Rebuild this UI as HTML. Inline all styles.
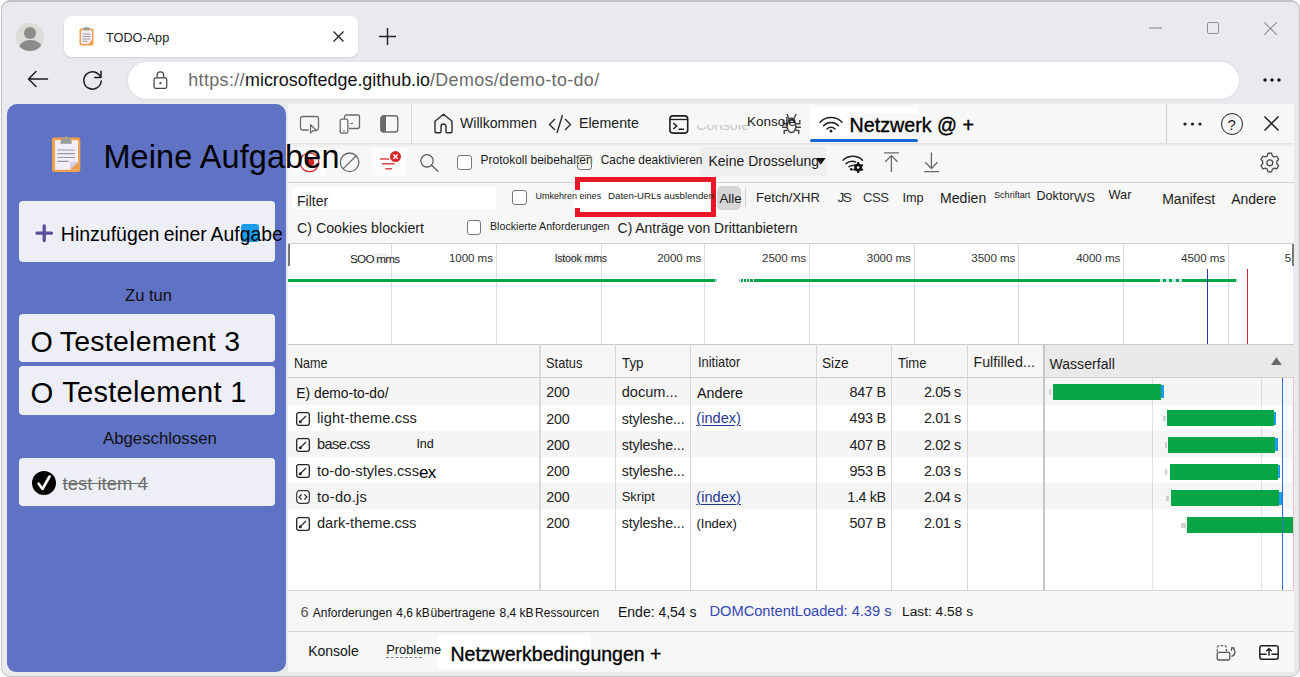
<!DOCTYPE html>
<html lang="de"><head><meta charset="utf-8"><title>TODO-App</title>
<style>
*{box-sizing:border-box;margin:0;padding:0}
html,body{width:1300px;height:677px;overflow:hidden;background:#fff}
body{font-family:"Liberation Sans",sans-serif;color:#111;position:relative}
.a{position:absolute}
.t{position:absolute;white-space:nowrap;line-height:1;color:#1b1b1b}
svg{position:absolute;overflow:visible}
.win{left:1px;top:0;width:1299px;height:677px;background:#e8eaee;border-radius:9px;border:1.5px solid #c2c2c2;border-top-width:2px}
.cb{position:absolute;width:14px;height:14px;border:1px solid #767676;border-radius:3px;background:#fff}
</style></head><body>
<div class="a win"></div>

<!-- ===== browser chrome ===== -->
<div id="chrome">
<div class="a" style="left:16px;top:22.500px;width:28px;height:28.500px;border-radius:50%;background:#dddbd8;overflow:hidden">
  <div class="a" style="left:7.800px;top:4px;width:12.400px;height:12.400px;border-radius:50%;background:#8d8b89"></div>
  <div class="a" style="left:2.500px;top:17.500px;width:23px;height:17px;border-radius:50%;background:#8d8b89"></div>
</div>
<div class="a" style="left:64px;top:16px;width:294px;height:41px;border-radius:8px;background:#fff;box-shadow:0 1px 2px rgba(0,0,0,.12)"></div>
<svg style="left:79px;top:27px" width="15" height="19" viewBox="0 0 15 19"><rect x="0.5" y="1.5" width="14" height="17" rx="1.5" fill="#f0a04b"/><rect x="2" y="3.2" width="11" height="13.6" fill="#f3eef5"/><rect x="4.5" y="0.3" width="6" height="3" rx="1" fill="#9a9a9a"/><path d="M3.5 7h8M3.5 9.5h8M3.5 12h8M3.5 14.3h5" stroke="#9b97a6" stroke-width="1"/><path d="M13 13v3.8H9.5z" fill="#e89a48"/></svg>
<div class="t" style="left:106px;top:31.700px;font-size:12.700px">TODO-App</div>
<svg style="left:333px;top:31px" width="11" height="11" viewBox="0 0 11 11"><path d="M0.5 0.5l10 10M10.5 0.5l-10 10" stroke="#222" stroke-width="1.3" fill="none"/></svg>
<svg style="left:379px;top:28px" width="17" height="17" viewBox="0 0 17 17"><path d="M8.5 0v17M0 8.5h17" stroke="#222" stroke-width="1.4" fill="none"/></svg>
<!-- window controls -->
<svg style="left:1149px;top:27px" width="13" height="2" viewBox="0 0 13 2"><path d="M0 1h13" stroke="#8e8f91" stroke-width="1.2"/></svg>
<div class="a" style="left:1207px;top:22px;width:12px;height:12px;border:1.2px solid #8e8f91;border-radius:2px"></div>
<svg style="left:1264px;top:22px" width="13" height="13" viewBox="0 0 13 13"><path d="M0.3 0.3l12.4 12.4M12.7 0.3L0.3 12.7" stroke="#8e8f91" stroke-width="1.1" fill="none"/></svg>
<!-- nav row -->
<svg style="left:27px;top:70px" width="21" height="18" viewBox="0 0 21 18"><path d="M20.5 9H1.5M9 1.5L1.5 9 9 16.5" stroke="#1b1b1b" stroke-width="1.5" fill="none" stroke-linecap="round" stroke-linejoin="round"/></svg>
<svg style="left:82px;top:69px" width="21" height="21" viewBox="0 0 21 21"><path d="M18.6 8.2A8.7 8.7 0 1 0 19.2 12" stroke="#1b1b1b" stroke-width="1.5" fill="none" stroke-linecap="round"/><path d="M19 2.2v6.2h-6.2" stroke="#1b1b1b" stroke-width="1.5" fill="none" stroke-linecap="round" stroke-linejoin="round"/></svg>
<div class="a" style="left:128px;top:62px;width:1111px;height:37px;border-radius:18.5px;background:#fff;box-shadow:0 0 3px rgba(0,0,0,.10)"></div>
<svg style="left:152.800px;top:70.500px" width="14.800" height="18.500" viewBox="0 0 16 21"><rect x="0.8" y="7.8" width="14.4" height="12" rx="2" fill="none" stroke="#444" stroke-width="1.4"/><path d="M4.3 7.6V4.6a3.7 3.7 0 0 1 7.4 0v3" fill="none" stroke="#444" stroke-width="1.4"/><circle cx="8" cy="13.8" r="1.3" fill="#444"/></svg>
<div class="t" style="left:188.20px;top:72.05px;font-size:17.9px;letter-spacing:0.387px;color:#6b6b6b">https://</div>
<div class="t" style="left:245.00px;top:72.05px;font-size:17.9px;letter-spacing:0.001px;color:#111">microsoftedge.github.io</div>
<div class="t" style="left:430.00px;top:72.05px;font-size:17.9px;letter-spacing:0.357px;color:#6b6b6b">/Demos/demo-to-do/</div>
<svg style="left:1263px;top:78px" width="18" height="4" viewBox="0 0 18 4"><circle cx="2" cy="2" r="1.7" fill="#111"/><circle cx="9" cy="2" r="1.7" fill="#111"/><circle cx="16" cy="2" r="1.7" fill="#111"/></svg>
</div>

<!-- ===== page ===== -->
<div id="page">
<div class="a" style="left:7px;top:104px;width:279px;height:567.5px;border-radius:10px 10px 10px 9px;background:#5f72c3"></div>
<svg style="left:50px;top:134px" width="32" height="40" viewBox="0 0 32 40"><rect x="2" y="3.400" width="28.300" height="34.600" rx="2.200" fill="#f0a04b"/><rect x="4.900" y="6.200" width="23.200" height="29.600" fill="#f2eef7"/><path d="M10.200 9.800L11.400 4.500H20.800L22 9.800z" fill="#9a9a9a"/><circle cx="16.100" cy="4.800" r="2.500" fill="#9a9a9a"/><circle cx="16.100" cy="4.600" r="1" fill="#f0a04b"/><path d="M7.300 16H25M7.300 19.700H25M7.300 23.500H25M7.300 27.300H18.500" stroke="#99979f" stroke-width="1.200"/><path d="M28.100 28V35.800H20z" fill="#e89b4c"/><path d="M20 28H28.100L20 35.800z" fill="#d5cde6"/></svg>
<div class="a" style="left:19px;top:201px;width:256px;height:61px;border-radius:4px;background:#eeeff6"></div>
<svg style="left:35px;top:224px" width="18" height="18" viewBox="0 0 18 18"><path d="M9.200 2v14.500M2 9.200h14.500" stroke="#5c4f9a" stroke-width="3.300" fill="none" stroke-linecap="round"/></svg>
<div class="a" style="left:241px;top:224px;width:18px;height:18px;border-radius:3px;background:#189be8"></div>
<div class="t" style="left:60.800px;top:225.300px;font-size:19.500px;color:#000">Hinzufügen <span style="position:absolute;left:103px;font-size:19.350px">einer </span><span style="position:absolute;left:149.800px;font-size:19.350px">Aufgabe</span></div>
<div class="t" style="left:125px;top:288px;font-size:16.600px;color:#111">Zu tun</div>
<div class="a" style="left:19px;top:313.600px;width:256px;height:48.800px;border-radius:4px;background:#eeeff6"></div>
<div class="t" style="left:30.60px;top:327.60px;font-size:28.700px;color:#000">O</div><div class="t" style="left:59.700px;top:327.17px;font-size:28.400px;letter-spacing:.3px;color:#000">Testelement 3</div>
<div class="a" style="left:19px;top:366px;width:256px;height:48.5px;border-radius:4px;background:#eeeff6"></div>
<div class="t" style="left:30.60px;top:377.70px;font-size:29.300px;color:#000">O</div><div class="t" style="left:62.200px;top:378.07px;font-size:29px;letter-spacing:.3px;color:#000">Testelement 1</div>
<div class="t" style="left:103.00px;top:430.80px;font-size:16.8px;color:#111">Abgeschlossen</div>
<div class="a" style="left:19px;top:457.500px;width:256px;height:48.900px;border-radius:4px;background:#eeeff6"></div>
<div class="a" style="left:32px;top:471px;width:24px;height:24px;border-radius:50%;background:#000"></div>
<svg style="left:32px;top:471px" width="24" height="24" viewBox="0 0 24 24"><path d="M6.500 12.500l4 5.500L17.500 5.500" stroke="#fff" stroke-width="2.6" fill="none" stroke-linejoin="round" stroke-linecap="round"/></svg>
<div class="t" style="left:62.50px;top:474.80px;font-size:18.5px;color:#6f6f6f;text-decoration:line-through">test item 4</div>
</div>

<!-- ===== devtools ===== -->
<div id="dt">
<div class="a" style="left:286px;top:104px;width:2px;height:567.500px;background:#e9e9eb"></div>
<div class="a" style="left:288px;top:104px;width:1006px;height:567.500px;background:#f7f7f7"></div>
<!-- tab bar -->
<div id="tabs">
<div class="a" style="left:288px;top:142.600px;width:1006px;height:4.500px;background:linear-gradient(#dcdcdc,#ececec 35%,#f7f7f7)"></div>
<div class="a" style="left:411px;top:104px;width:1px;height:39px;background:#d9d9d9"></div>
<div class="a" style="left:1166px;top:104px;width:1px;height:39px;background:#cfcfcf"></div>
<div class="a" style="left:810px;top:106.600px;width:108px;height:35px;background:#fff;border-radius:4px 4px 2px 2px"></div>
<div class="a" style="left:849px;top:113px;width:69px;height:22.500px;background:#f7f7f7"></div>
<div class="a" style="left:810px;top:139px;width:108px;height:3.200px;background:#1467d6;border-radius:2px"></div>
<svg style="left:299px;top:114px" width="22" height="21" viewBox="0 0 22 21"><path d="M9.500 16H3.500a2 2 0 0 1-2-2V4.500a2 2 0 0 1 2-2h14a2 2 0 0 1 2 2v9.500a2 2 0 0 1-1.500 1.900" fill="none" stroke="#6a6a6a" stroke-width="1.3"/><path d="M11.500 10.800v8.200l2.700-2.300h3.600z" fill="#f7f7f7" stroke="#6a6a6a" stroke-width="1.2" stroke-linejoin="round"/></svg>
<svg style="left:339px;top:113px" width="22" height="22" viewBox="0 0 22 22"><path d="M5.500 6V4a2 2 0 0 1 2-2h11a2 2 0 0 1 2 2v9.500a2 2 0 0 1-2 2H10" fill="none" stroke="#6a6a6a" stroke-width="1.3"/><rect x="1.200" y="6.200" width="7.600" height="14" rx="1.800" fill="#f7f7f7" stroke="#6a6a6a" stroke-width="1.3"/><path d="M4 18h2M11.500 10.500h2.500" stroke="#6a6a6a" stroke-width="1.200"/></svg>
<svg style="left:380px;top:115px" width="19" height="18" viewBox="0 0 19 18"><rect x="0.800" y="0.800" width="17" height="16.200" rx="2.800" fill="none" stroke="#6a6a6a" stroke-width="1.400"/><path d="M3.300 0.800h2.700v16.200H3.300a2.500 2.500 0 0 1-2.500-2.500V3.300a2.500 2.500 0 0 1 2.500-2.500z" fill="#6a6a6a"/></svg>
<svg style="left:433px;top:113px" width="21" height="21" viewBox="0 0 21 21"><path d="M10.500 1.200L2 8.300v10.200a1.300 1.300 0 0 0 1.300 1.300h3.400a1.300 1.300 0 0 0 1.300-1.300v-5a2.500 2.500 0 0 1 5 0v5a1.300 1.300 0 0 0 1.300 1.300h3.400a1.300 1.300 0 0 0 1.300-1.300V8.300z" fill="none" stroke="#2a2a2a" stroke-width="1.400" stroke-linejoin="round"/></svg>
<div class="t" style="left:460px;top:116px;font-size:14.100px">Willkommen</div>
<svg style="left:548px;top:114px" width="24" height="20" viewBox="0 0 24 20"><path d="M7 5L1.500 10.500 7 16M17 5l5.500 5.500L17 16M14.500 1l-5.500 18" fill="none" stroke="#2a2a2a" stroke-width="1.400" stroke-linejoin="miter"/></svg>
<div class="t" style="left:579px;top:116px;font-size:14.200px">Elemente</div>
<svg style="left:669px;top:115px" width="20" height="19" viewBox="0 0 20 19"><rect x="0.900" y="0.900" width="17.800" height="17.200" rx="3" fill="none" stroke="#1f1f1f" stroke-width="1.600"/><path d="M1 4.500h17.500" stroke="#1f1f1f" stroke-width="1.300"/><path d="M4.300 8l3.400 3-3.400 3M9.500 14.200h5.500" fill="none" stroke="#1f1f1f" stroke-width="1.500"/></svg>
<div class="t" style="left:696px;top:117.500px;font-size:14.500px;color:#c9c9c9">Console</div>
<div class="a" style="left:694px;top:115px;width:56px;height:10px;background:#f7f7f7"></div>
<svg style="left:781px;top:113px" width="21" height="21" viewBox="0 0 21 21"><ellipse cx="10.500" cy="13.200" rx="4.400" ry="6.300" fill="none" stroke="#444" stroke-width="1.500"/><path d="M7.200 8.500a3.300 3.300 0 0 1 6.600 0M7.800 5.200L5.800 1M13.200 5.200l2-4.200M6.200 10.800H2.200V7M14.800 10.800h4V7M6 14.200H1M15 14.200h5M6.500 17.300l-3.300.4V21M14.500 17.300l3.300.4V21" fill="none" stroke="#444" stroke-width="1.400"/></svg>
<div class="t" style="left:747px;top:114.500px;font-size:13.500px">Konsole</div>
<svg style="left:819px;top:116px" width="24" height="17" viewBox="0 0 24 17"><path d="M1 6.200a15.500 15.500 0 0 1 22 0M4.500 9.700a10.500 10.500 0 0 1 15 0M8 13a5.600 5.600 0 0 1 8 0" fill="none" stroke="#1f1f1f" stroke-width="1.500" stroke-linecap="round"/><circle cx="12" cy="15" r="1.500" fill="#1f1f1f"/></svg>
<div class="t" style="left:849.50px;top:115.70px;font-size:19.700px;color:#000;-webkit-text-stroke:.35px #000">Netzwerk @ +</div>
<svg style="left:1183px;top:122px" width="19" height="4" viewBox="0 0 19 4"><circle cx="2" cy="2" r="1.600" fill="#1b1b1b"/><circle cx="9.500" cy="2" r="1.600" fill="#1b1b1b"/><circle cx="17" cy="2" r="1.600" fill="#1b1b1b"/></svg>
<div class="a" style="left:1221px;top:113px;width:22px;height:22px;border:1.400px solid #1f1f1f;border-radius:50%"></div>
<div class="t" style="left:1227.500px;top:116.500px;font-size:15px;color:#1f1f1f">?</div>
<svg style="left:1264px;top:116px" width="15" height="15" viewBox="0 0 15 15"><path d="M0.500 0.500l14 14M14.500 0.500l-14 14" stroke="#1b1b1b" stroke-width="1.500" fill="none"/></svg>
</div>
<!-- toolbar -->
<div id="tb">
<div class="a" style="left:288px;top:182px;width:1006px;height:1px;background:#d6d6d6"></div>
<div class="a" style="left:292px;top:148px;width:35px;height:28px;background:#fcfcfc;border-radius:3px"></div>
<div class="a" style="left:372px;top:148px;width:35px;height:28px;background:#fcfcfc;border-radius:3px"></div>
<div class="a" style="left:700px;top:147px;width:126px;height:29px;background:#efefef;border-radius:3px"></div>
<svg style="left:299px;top:152px" width="21" height="21" viewBox="0 0 21 21"><circle cx="10.500" cy="10.300" r="9.400" fill="none" stroke="#d9262c" stroke-width="1.300"/><circle cx="11.500" cy="10.300" r="3.800" fill="#d9262c"/></svg>
<svg style="left:339px;top:152px" width="21" height="21" viewBox="0 0 21 21"><circle cx="10.600" cy="10.300" r="9.300" fill="none" stroke="#6a6a6a" stroke-width="1.300"/><path d="M4 16.900L17.200 3.700" stroke="#6a6a6a" stroke-width="1.300"/></svg>
<svg style="left:378px;top:150px" width="24" height="22" viewBox="0 0 24 22"><path d="M2 9h9M4 13.800h12.600M7.300 18.800h6.700" stroke="#e0474c" stroke-width="1.500" fill="none"/><circle cx="17.500" cy="6.600" r="5.500" fill="#d9262c"/><path d="M15.400 4.500l4.200 4.200M19.600 4.500l-4.200 4.200" stroke="#fff" stroke-width="1.400"/></svg>
<svg style="left:419px;top:153px" width="21" height="20" viewBox="0 0 21 20"><circle cx="8" cy="7.800" r="6.200" fill="none" stroke="#5f5f5f" stroke-width="1.300"/><path d="M12.500 12.300l6.500 6" stroke="#5f5f5f" stroke-width="1.400" stroke-linecap="round"/></svg>
<div class="cb" style="left:457.300px;top:155px;width:14.700px;height:14.500px"></div>
<div class="t" style="left:480.5px;top:153.64px;font-size:12.0px">Protokoll beibehalten</div>
<div class="cb" style="left:577px;top:155px;width:14.700px;height:14.500px;background:transparent"></div>
<div class="t" style="left:600.70px;top:155.43px;font-size:11.9px">Cache deaktivieren</div>
<div class="t" style="left:708.50px;top:153.65px;font-size:14.0px">Keine Drosselung</div>
<svg style="left:816px;top:158px" width="10" height="7" viewBox="0 0 10 7"><path d="M0 0h9.600L4.800 6.800z" fill="#111"/></svg>
<svg style="left:842px;top:154px" width="22" height="19" viewBox="0 0 22 19"><path d="M1 6.200a14 14 0 0 1 19.500 0M4 9.600a9.500 9.500 0 0 1 9.500-1.700M7 12.800a5 5 0 0 1 3.600-1.300" fill="none" stroke="#1f1f1f" stroke-width="1.500" stroke-linecap="round"/><circle cx="9.300" cy="15.300" r="1.400" fill="#1f1f1f"/><g transform="translate(16.200 13.500)"><circle r="2.700" fill="none" stroke="#111" stroke-width="2.400"/><path d="M0-5.400V5.400M-4.700 -2.700L4.700 2.700M-4.700 2.700L4.700 -2.700" stroke="#111" stroke-width="2"/><circle r="1.300" fill="#f7f7f7"/></g></svg>
<svg style="left:883px;top:152px" width="17" height="21" viewBox="0 0 17 21"><path d="M1 0.800h15M8.400 4v16M2.300 9.800L8.400 3.600l6.100 6.200" fill="none" stroke="#6a6a6a" stroke-width="1.300"/></svg>
<svg style="left:923px;top:152px" width="17" height="21" viewBox="0 0 17 21"><path d="M1 19.600h15M8.400 0.500v15.500M2.300 10.300l6.100 6.200 6.100-6.200" fill="none" stroke="#6a6a6a" stroke-width="1.300"/></svg>
<svg style="left:1257.500px;top:150.500px" width="23.600" height="23.600" viewBox="0 0 24 24"><path d="M12 9a3 3 0 1 0 0 6 3 3 0 0 0 0-6z" fill="none" stroke="#4a4a4a" stroke-width="1.300"/><path d="M10.100 2.300l-.6 2.600a7.500 7.500 0 0 0-2.100 1.200L4.900 5.300 3 8.700l1.900 1.800a7.600 7.600 0 0 0 0 2.500L3 14.800l1.900 3.400 2.500-.8c.6.500 1.300.9 2.100 1.200l.6 2.600h3.800l.6-2.600a7.500 7.500 0 0 0 2.100-1.200l2.500.8 1.900-3.400-1.900-1.800a7.600 7.600 0 0 0 0-2.500L21 8.700l-1.900-3.400-2.500.8a7.500 7.500 0 0 0-2.100-1.200l-.6-2.600z" fill="none" stroke="#4a4a4a" stroke-width="1.300" stroke-linejoin="round"/></svg>
</div>
<!-- filter rows -->
<div id="flt">
<div class="a" style="left:292px;top:186.500px;width:204px;height:22.300px;background:#fff"></div>
<div class="a" style="left:717px;top:186px;width:24px;height:24px;background:#d6d6d6;border-radius:5px"></div>
<div class="a" style="left:745px;top:188px;width:1px;height:19px;background:#cfcfcf"></div>
<div class="t" style="left:297px;top:193.65px;font-size:14.0px">Filter</div>
<div class="cb" style="left:512.400px;top:190px;width:14.600px;height:14.800px"></div>
<div class="a" style="left:575px;top:177px;width:141px;height:40px;border:5px solid #e81828;background:#fff"></div>
<div class="a" style="left:574px;top:190px;width:32px;height:18px;background:#fff"></div>
<div class="t" style="left:535.60px;top:192.08px;font-size:9.0px">Umkehren eines</div>
<div class="t" style="left:608px;top:191.39px;font-size:9.7px">Daten-URLs ausblenden</div>
<div class="t" style="left:719.40px;top:192.14px;font-size:13.3px">Alle</div>
<div class="t" style="left:756px;top:190.51px;font-size:13.1px;color:#222">Fetch/XHR</div>
<div class="t" style="left:837.6px;top:190.79px;font-size:13.6px;letter-spacing:-1.638px;color:#333">JS</div>
<div class="t" style="left:863px;top:190.51px;font-size:13.1px;letter-spacing:-0.513px;color:#333">CSS</div>
<div class="t" style="left:902.40px;top:191.65px;font-size:12.7px;color:#222">Imp</div>
<div class="t" style="left:940.00px;top:191.46px;font-size:14.1px">Medien</div>
<div class="t" style="left:994px;top:190.8px;font-size:9.1px">Schriftart</div>
<div class="t" style="left:1036.5px;top:189.63px;font-size:12.6px">Doktor</div>
<div class="t" style="left:1073.8px;top:191.34px;font-size:13.3px;color:#333">WS</div>
<div class="t" style="left:1108.5px;top:188.96px;font-size:12.8px">War</div>
<div class="t" style="left:1162.2px;top:191.65px;font-size:14.0px">Manifest</div>
<div class="t" style="left:1231.20px;top:192.25px;font-size:14.0px">Andere</div>
<div class="t" style="left:297.00px;top:220.68px;font-size:14.2px">C) Cookies blockiert</div>
<div class="cb" style="left:466.500px;top:220.300px;width:14.600px;height:14.800px"></div>
<div class="t" style="left:490.00px;top:220.98px;font-size:10.65px">Blockierte Anforderungen</div>
<div class="t" style="left:617.60px;top:221.93px;font-size:13.9px">C) Anträge von Drittanbietern</div>
</div>
<!-- overview -->
<div id="ov">
<div class="a" style="left:288px;top:243px;width:1006px;height:101px;background:#fff;border-top:1px solid #d0d0d0"></div>
<div class="a" style="left:390.9px;top:244px;width:1.200px;height:100px;background:#dcdcdc"></div>
<div class="a" style="left:495.7px;top:244px;width:1.200px;height:100px;background:#dcdcdc"></div>
<div class="a" style="left:600.6px;top:244px;width:1.200px;height:100px;background:#dcdcdc"></div>
<div class="a" style="left:704.0px;top:244px;width:1.200px;height:100px;background:#dcdcdc"></div>
<div class="a" style="left:808.8px;top:244px;width:1.200px;height:100px;background:#dcdcdc"></div>
<div class="a" style="left:913.6px;top:244px;width:1.200px;height:100px;background:#dcdcdc"></div>
<div class="a" style="left:1018.1px;top:244px;width:1.200px;height:100px;background:#dcdcdc"></div>
<div class="a" style="left:1123.0px;top:244px;width:1.200px;height:100px;background:#dcdcdc"></div>
<div class="a" style="left:1227.8px;top:244px;width:1.200px;height:100px;background:#dcdcdc"></div>
<div class="a" style="left:288px;top:278.600px;width:427px;height:3.400px;background:#06a647"></div>
<div class="a" style="left:715px;top:278.600px;width:1.500px;height:3.400px;background:#9fd4f5"></div>
<div class="a" style="left:738.500px;top:278.600px;width:1px;height:3.400px;background:#bdbdbd"></div>
<div class="a" style="left:741px;top:278.600px;width:1.5px;height:3.400px;background:#06a647"></div>
<div class="a" style="left:743.6px;top:278.600px;width:2.2px;height:3.400px;background:#06a647"></div>
<div class="a" style="left:747px;top:278.600px;width:2.2px;height:3.400px;background:#06a647"></div>
<div class="a" style="left:750.4px;top:278.600px;width:2.2px;height:3.400px;background:#06a647"></div>
<div class="a" style="left:753.500px;top:278.600px;width:406px;height:3.400px;background:#06a647"></div>
<div class="a" style="left:1159.500px;top:278.600px;width:22.500px;height:3.400px;background:#bfe3f7"></div>
<div class="a" style="left:1163px;top:278.600px;width:3px;height:3.400px;background:#06a647"></div>
<div class="a" style="left:1169px;top:278.600px;width:3px;height:3.400px;background:#06a647"></div>
<div class="a" style="left:1175.5px;top:278.600px;width:3px;height:3.400px;background:#06a647"></div>
<div class="a" style="left:1182px;top:278.600px;width:54px;height:3.400px;background:#06a647"></div>
<div class="a" style="left:1236px;top:278.600px;width:1.500px;height:3.400px;background:#bfe3f7"></div>
<div class="a" style="left:1206.600px;top:268.500px;width:1.600px;height:75.500px;background:#2f35b5"></div>
<div class="a" style="left:1246.800px;top:268.500px;width:1.400px;height:75.500px;background:#dd2030"></div>
<div class="a" style="left:288px;top:244px;width:1.800px;height:21.500px;background:#777"></div>
<div class="a" style="left:1292px;top:244px;width:2px;height:21.500px;background:#7a7a7a"></div>
<div class="a" style="left:1292.800px;top:265.500px;width:1.200px;height:78px;background:#e3ecfb"></div>
<div class="a" style="left:374px;top:253px;width:14px;height:10.500px;background:#f1f1f1"></div>
<div class="a" style="left:555px;top:253px;width:43px;height:10.500px;background:#f1f1f1"></div>
<div class="t" style="left:350px;top:252.5px;font-size:11.7px;letter-spacing:-0.735px;color:#222">SOO mms</div>
<div class="t" style="left:555px;top:253.43px;font-size:10.6px;letter-spacing:-0.158px;color:#222">lstook mms</div>
<div class="t" style="left:448.93px;top:251.78px;font-size:11.6px;letter-spacing:-0.067px;color:#333">1000 ms</div>
<div class="t" style="left:657.23px;top:251.78px;font-size:11.6px;letter-spacing:-0.067px;color:#333">2000 ms</div>
<div class="t" style="left:762.03px;top:251.78px;font-size:11.6px;letter-spacing:-0.067px;color:#333">2500 ms</div>
<div class="t" style="left:866.83px;top:251.78px;font-size:11.6px;letter-spacing:-0.067px;color:#333">3000 ms</div>
<div class="t" style="left:971.33px;top:251.78px;font-size:11.6px;letter-spacing:-0.067px;color:#333">3500 ms</div>
<div class="t" style="left:1076.23px;top:251.78px;font-size:11.6px;letter-spacing:-0.067px;color:#333">4000 ms</div>
<div class="t" style="left:1181.03px;top:251.78px;font-size:11.6px;letter-spacing:-0.067px;color:#333">4500 ms</div>
<div class="t" style="left:1284.80px;top:251.78px;font-size:11.6px;color:#333">5</div>
</div>
<!-- table -->
<div id="tbl">
<div class="a" style="left:288px;top:344px;width:1006px;height:246px;background:#fff"></div>
<div class="a" style="left:288px;top:344px;width:756px;height:34px;background:#f6f6f6"></div>
<div class="a" style="left:1044px;top:344px;width:250px;height:34px;background:#e9e9e9"></div>
<div class="a" style="left:288px;top:378px;width:1006px;height:26.5px;background:#f5f5f5"></div>
<div class="a" style="left:288px;top:430.7px;width:1006px;height:26.3px;background:#f5f5f5"></div>
<div class="a" style="left:288px;top:483.2px;width:1006px;height:26.2px;background:#f5f5f5"></div>
<div class="a" style="left:288px;top:343.500px;width:1006px;height:1.300px;background:#c9c9cf"></div>
<div class="a" style="left:288px;top:377.300px;width:1006px;height:1px;background:#cdcdcd"></div>
<div class="a" style="left:539.4px;top:344px;width:1.200px;height:246px;background:#d9d9dd"></div>
<div class="a" style="left:614.8px;top:344px;width:1.200px;height:246px;background:#d9d9dd"></div>
<div class="a" style="left:689.8px;top:344px;width:1.200px;height:246px;background:#d9d9dd"></div>
<div class="a" style="left:815.8px;top:344px;width:1.200px;height:246px;background:#d9d9dd"></div>
<div class="a" style="left:891.1px;top:344px;width:1.200px;height:246px;background:#d9d9dd"></div>
<div class="a" style="left:967.0px;top:344px;width:1.200px;height:246px;background:#d9d9dd"></div>
<div class="a" style="left:1043.300px;top:344px;width:1.600px;height:246px;background:#c6c6c6"></div>
<div class="a" style="left:1151.9px;top:378px;width:1px;height:212px;background:rgba(0,0,0,.11)"></div>
<div class="a" style="left:1261.0px;top:378px;width:1px;height:212px;background:rgba(0,0,0,.11)"></div>
<div class="t" style="left:294.3px;top:356.28px;font-size:14.2px;transform:scaleX(0.8875);transform-origin:0 50%">Name</div>
<div class="t" style="left:546.3px;top:356.28px;font-size:14.2px;transform:scaleX(0.9047);transform-origin:0 50%">Status</div>
<div class="t" style="left:621.7px;top:356.28px;font-size:14.2px;transform:scaleX(0.9399);transform-origin:0 50%">Typ</div>
<div class="t" style="left:697.8px;top:354.58px;font-size:14.2px;transform:scaleX(0.9069);transform-origin:0 50%">Initiator</div>
<div class="t" style="left:822.2px;top:356.28px;font-size:14.2px;transform:scaleX(0.9634);transform-origin:0 50%">Size</div>
<div class="t" style="left:898px;top:356.28px;font-size:14.2px;transform:scaleX(0.9157);transform-origin:0 50%">Time</div>
<div class="t" style="left:973.40px;top:355.18px;font-size:14.2px;letter-spacing:0.073px;color:#222">Fulfilled...</div>
<div class="t" style="left:1049.50px;top:356.65px;font-size:14.0px;letter-spacing:0.047px">Wasserfall</div>
<svg style="left:1270.600px;top:357px" width="11" height="8" viewBox="0 0 11 8"><path d="M0 8L5.400 0.300 10.800 8z" fill="#6b6b6b"/></svg>
<div class="t" style="left:296.30px;top:387.32px;font-size:13.8px;letter-spacing:0.012px;color:#111">E) demo-to-do/</div>
<div class="t" style="left:546.30px;top:385.10px;font-size:14.3px;letter-spacing:-0.220px;color:#222">200</div>
<div class="t" style="left:317.00px;top:411.14px;font-size:14.6px;letter-spacing:0.124px;color:#222">light-theme.css</div>
<svg style="left:296.300px;top:411.8px" width="14" height="14" viewBox="0 0 14 14"><rect x="0.700" y="0.700" width="12.600" height="12.600" rx="2" fill="#fff" stroke="#222" stroke-width="1.300"/><path d="M4.300 9.700L10 4" stroke="#222" stroke-width="1.200"/><circle cx="4.300" cy="9.800" r="1.500" fill="#222"/></svg>
<div class="t" style="left:546.30px;top:411.50px;font-size:14.3px;letter-spacing:-0.220px;color:#222">200</div>
<div class="t" style="left:317.00px;top:437.24px;font-size:14.6px;letter-spacing:-0.612px;color:#222">base.css</div>
<svg style="left:296.300px;top:437.9px" width="14" height="14" viewBox="0 0 14 14"><rect x="0.700" y="0.700" width="12.600" height="12.600" rx="2" fill="#fff" stroke="#222" stroke-width="1.300"/><path d="M4.300 9.700L10 4" stroke="#222" stroke-width="1.200"/><circle cx="4.300" cy="9.800" r="1.500" fill="#222"/></svg>
<div class="t" style="left:546.30px;top:437.60px;font-size:14.3px;letter-spacing:-0.220px;color:#222">200</div>
<div class="t" style="left:317.00px;top:463.64px;font-size:14.6px;letter-spacing:0.039px;color:#222">to-do-styles.css</div>
<svg style="left:296.300px;top:464.3px" width="14" height="14" viewBox="0 0 14 14"><rect x="0.700" y="0.700" width="12.600" height="12.600" rx="2" fill="#fff" stroke="#222" stroke-width="1.300"/><path d="M4.300 9.700L10 4" stroke="#222" stroke-width="1.200"/><circle cx="4.300" cy="9.800" r="1.500" fill="#222"/></svg>
<div class="t" style="left:546.30px;top:464.00px;font-size:14.3px;letter-spacing:-0.220px;color:#222">200</div>
<div class="t" style="left:317.00px;top:489.74px;font-size:14.6px;letter-spacing:0.293px;color:#222">to-do.js</div>
<svg style="left:296.300px;top:490.4px" width="14" height="14" viewBox="0 0 14 14"><rect x="0.700" y="0.700" width="12.600" height="12.600" rx="3" fill="#fff" stroke="#333" stroke-width="1.200"/><path d="M5.600 4.400L3.100 7l2.500 2.600M8.400 4.400L10.900 7 8.400 9.600" fill="none" stroke="#222" stroke-width="1.200"/></svg>
<div class="t" style="left:546.30px;top:490.10px;font-size:14.3px;letter-spacing:-0.220px;color:#222">200</div>
<div class="t" style="left:317.00px;top:516.04px;font-size:14.6px;letter-spacing:-0.026px;color:#222">dark-theme.css</div>
<svg style="left:296.300px;top:516.7px" width="14" height="14" viewBox="0 0 14 14"><rect x="0.700" y="0.700" width="12.600" height="12.600" rx="2" fill="#fff" stroke="#222" stroke-width="1.300"/><path d="M4.300 9.700L10 4" stroke="#222" stroke-width="1.200"/><circle cx="4.300" cy="9.800" r="1.500" fill="#222"/></svg>
<div class="t" style="left:546.30px;top:516.40px;font-size:14.3px;letter-spacing:-0.220px;color:#222">200</div>
<div class="t" style="left:621.70px;top:384.84px;font-size:14.6px;letter-spacing:0.004px;color:#222">docum...</div>
<div class="t" style="left:621.70px;top:411.50px;font-size:14.3px;letter-spacing:-0.143px;color:#222">styleshe...</div>
<div class="t" style="left:621.70px;top:437.60px;font-size:14.3px;letter-spacing:-0.143px;color:#222">styleshe...</div>
<div class="t" style="left:621.70px;top:464.00px;font-size:14.3px;letter-spacing:-0.143px;color:#222">styleshe...</div>
<div class="t" style="left:621.7px;top:489.8px;font-size:13px;letter-spacing:-0.006px;color:#222">Skript</div>
<div class="t" style="left:621.70px;top:516.40px;font-size:14.3px;letter-spacing:-0.143px;color:#222">styleshe...</div>
<div class="t" style="left:697.00px;top:385.80px;font-size:14.3px;letter-spacing:-0.018px;color:#111">Andere</div>
<div class="t" style="left:696.30px;top:411.24px;font-size:14.6px;letter-spacing:0.013px;color:#1f3a93;text-decoration:underline;text-decoration-thickness:1px;text-underline-offset:2px">(index)</div>
<div class="t" style="left:696.30px;top:489.84px;font-size:14.6px;letter-spacing:0.013px;color:#1f3a93;text-decoration:underline;text-decoration-thickness:1px;text-underline-offset:2px">(index)</div>
<div class="t" style="left:696.5px;top:517.2px;font-size:13.0px;letter-spacing:-0.024px;color:#111">(Index)</div>
<div class="t" style="left:849.48px;top:385.01px;font-size:14.4px;letter-spacing:-0.222px;color:#222">847 B</div>
<div class="t" style="left:923.93px;top:385.01px;font-size:14.4px;letter-spacing:-0.367px;color:#222">2.05 s</div>
<div class="t" style="left:849.48px;top:411.41px;font-size:14.4px;letter-spacing:-0.222px;color:#222">493 B</div>
<div class="t" style="left:923.93px;top:411.41px;font-size:14.4px;letter-spacing:-0.367px;color:#222">2.01 s</div>
<div class="t" style="left:849.48px;top:437.51px;font-size:14.4px;letter-spacing:-0.222px;color:#222">407 B</div>
<div class="t" style="left:923.93px;top:437.51px;font-size:14.4px;letter-spacing:-0.367px;color:#222">2.02 s</div>
<div class="t" style="left:849.48px;top:463.91px;font-size:14.4px;letter-spacing:-0.222px;color:#222">953 B</div>
<div class="t" style="left:923.93px;top:463.91px;font-size:14.4px;letter-spacing:-0.367px;color:#222">2.03 s</div>
<div class="t" style="left:847.31px;top:490.01px;font-size:14.4px;letter-spacing:-0.385px;color:#222">1.4 kB</div>
<div class="t" style="left:923.93px;top:490.01px;font-size:14.4px;letter-spacing:-0.367px;color:#222">2.04 s</div>
<div class="t" style="left:849.48px;top:516.31px;font-size:14.4px;letter-spacing:-0.222px;color:#222">507 B</div>
<div class="t" style="left:923.93px;top:516.31px;font-size:14.4px;letter-spacing:-0.367px;color:#222">2.01 s</div>
<div class="t" style="left:416.4px;top:438.12px;font-size:12.5px;letter-spacing:0.003px;color:#111">Ind</div>
<div class="t" style="left:419px;top:464.41px;font-size:17px;letter-spacing:-0.584px;color:#000">ex</div>
<div class="a" style="left:1049px;top:389.1px;width:2.2px;height:5.500px;background:#d0d0d0"></div>
<div class="a" style="left:1053px;top:383.6px;width:108.0px;height:16px;background:#06a647"></div>
<div class="a" style="left:1161px;top:385.1px;width:2.6px;height:13px;background:#1c9cf0"></div>
<div class="a" style="left:1163px;top:415.9px;width:2.6px;height:5.500px;background:#d0d0d0"></div>
<div class="a" style="left:1167px;top:410.4px;width:107.0px;height:16px;background:#06a647"></div>
<div class="a" style="left:1274px;top:411.9px;width:2.4px;height:13px;background:#1c9cf0"></div>
<div class="a" style="left:1165px;top:442.3px;width:2.0px;height:5.500px;background:#d0d0d0"></div>
<div class="a" style="left:1168.4px;top:436.8px;width:106.6px;height:16px;background:#06a647"></div>
<div class="a" style="left:1275px;top:438.3px;width:2.6px;height:13px;background:#1c9cf0"></div>
<div class="a" style="left:1164.8px;top:469.2px;width:2.7px;height:5.500px;background:#d0d0d0"></div>
<div class="a" style="left:1169.7px;top:463.7px;width:108.0px;height:16px;background:#06a647"></div>
<div class="a" style="left:1277.7px;top:465.2px;width:2.3px;height:13px;background:#1c9cf0"></div>
<div class="a" style="left:1166px;top:495.9px;width:2.6px;height:5.500px;background:#d0d0d0"></div>
<div class="a" style="left:1170.8px;top:490.4px;width:108.2px;height:16px;background:#06a647"></div>
<div class="a" style="left:1279px;top:491.9px;width:2.5px;height:13px;background:#1c9cf0"></div>
<div class="a" style="left:1181.2px;top:522.5px;width:5.1px;height:5.500px;background:#d0d0d0"></div>
<div class="a" style="left:1187.2px;top:517px;width:106.0px;height:16px;background:#06a647"></div>
<div class="a" style="left:1281.700px;top:378px;width:1.500px;height:212.500px;background:#2a6fd6"></div>
<div class="a" style="left:1292.800px;top:378px;width:1px;height:212.500px;background:#f3c4c8"></div>
</div>
<!-- status + drawer -->
<div id="st">
<div class="a" style="left:288px;top:590px;width:1006px;height:1px;background:#d4d4d4"></div>
<div class="a" style="left:288px;top:630.700px;width:1006px;height:1.500px;background:#d2d4d8"></div>
<div class="t" style="left:300.60px;top:604.56px;font-size:14.7px;color:#555">6</div>
<div class="t" style="left:312.90px;top:606.84px;font-size:12.0px;color:#111;width:290px;height:12px"><span style="position:absolute;left:-0.20px;top:0">Anforderungen </span><span style="position:absolute;left:83.40px;top:0">4,6 </span><span style="position:absolute;left:102.80px;top:0">kB </span><span style="position:absolute;left:117.60px;top:0">übertragene </span><span style="position:absolute;left:186.60px;top:0">8,4 </span><span style="position:absolute;left:206.60px;top:0">kB </span><span style="position:absolute;left:222.20px;top:0">Ressourcen </span></div>
<div class="t" style="left:618.00px;top:604.85px;font-size:14px;letter-spacing:-0.010px;color:#111">Ende: 4,54 s</div>
<div class="t" style="left:709.50px;top:604.26px;font-size:14.7px;letter-spacing:-0.038px;color:#3646b5">DOMContentLoaded: 4.39 s</div>
<div class="t" style="left:902.00px;top:605.10px;font-size:13.7px;letter-spacing:0.020px;color:#111">Last: 4.58 s</div>
<div class="a" style="left:437px;top:635px;width:153.500px;height:34px;background:#fff;border-radius:3px"></div>
<div class="t" style="left:308.20px;top:644.15px;font-size:14px;letter-spacing:-0.013px;color:#111">Konsole</div>
<div class="t" style="left:386.20px;top:643.92px;font-size:12.85px;letter-spacing:0.004px;color:#111">Probleme</div>
<div class="a" style="left:386.400px;top:657px;width:36px;height:0;border-top:1px dashed #888"></div>
<svg style="left:1216px;top:644px" width="23" height="18" viewBox="0 0 23 18"><path d="M1.300 7.500V3.700a2 2 0 0 1 2-2h5.200a2 2 0 0 1 2 2v3.800" fill="none" stroke="#555" stroke-width="1.300" stroke-dasharray="2.300 1.700"/><rect x="1.200" y="8.300" width="12.600" height="7.700" rx="1.500" fill="none" stroke="#555" stroke-width="1.300"/><path d="M15.400 12.300a4.200 4.200 0 0 0 1.300-7.800" fill="none" stroke="#555" stroke-width="1.300"/><path d="M15.300 6.800l.5-3.300 3 .9" fill="none" stroke="#555" stroke-width="1.200"/></svg>
<div class="a" style="left:1257px;top:641px;width:24px;height:23px;background:#fafafa"></div>
<svg style="left:1259px;top:645px" width="20" height="15" viewBox="0 0 20 15"><rect x="0.800" y="0.800" width="18.400" height="13.400" rx="2.200" fill="#fff" stroke="#1f1f1f" stroke-width="1.500"/><path d="M1 9.300h6.500M12.500 9.300h6.500M10 10.800V4M7.300 6.300L10 3.500l2.700 2.800" fill="none" stroke="#1f1f1f" stroke-width="1.400"/></svg>
</div>
</div>

<div id="over">
<div class="t" style="left:103.500px;top:141px;font-size:32.400px;letter-spacing:.14px;color:#000">Meine Aufgaben</div>
<div class="t" style="left:450.50px;top:645.29px;font-size:19.5px;letter-spacing:0.007px;color:#000;-webkit-text-stroke:.35px #000">Netzwerkbedingungen +</div>
</div>
</body></html>
